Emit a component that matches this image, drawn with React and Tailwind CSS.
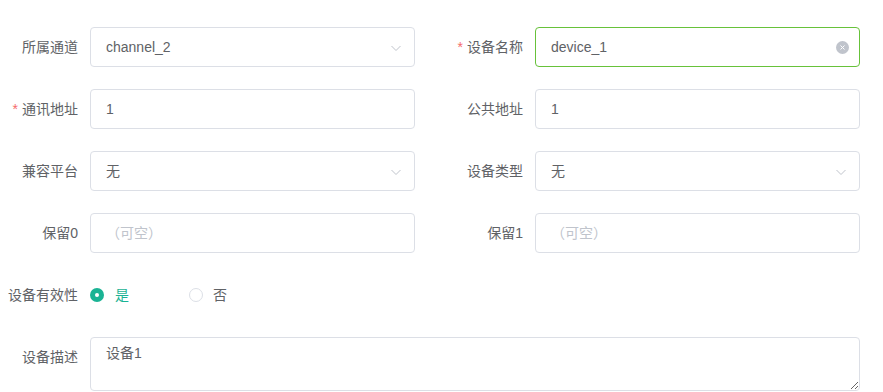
import React from "react";

const font = { fontFamily: '"Liberation Sans", "Noto Sans CJK SC", sans-serif' };

function Label({ children, required }) {
  return (
    <div className="w-[90px] shrink-0 pr-3 flex items-center justify-end text-[14px] text-[#606266] whitespace-nowrap">
      {required && <span className="text-[#f56c6c] mr-[4px]">*</span>}
      {children}
    </div>
  );
}

function Chevron() {
  return (
    <svg width="12" height="12" viewBox="0 0 12 12" className="absolute right-[12px] top-[14px]">
      <path d="M1.5 4 L6 8.5 L10.5 4" fill="none" stroke="#c0c4cc" strokeWidth="1" />
    </svg>
  );
}

function Field({ label, required, value, placeholder, select, clear, success }) {
  return (
    <div className="flex h-10">
      <Label required={required}>{label}</Label>
      <div
        className={`relative w-[325px] h-10 rounded-[4px] border bg-white flex items-center pl-[15px] text-[14px] ${
          success ? "border-[#67c23a]" : "border-[#dcdfe6]"
        }`}
      >
        {value ? (
          <span className="text-[#606266]">{value}</span>
        ) : (
          <span className="text-[#c0c4cc]">{placeholder}</span>
        )}
        {select && <Chevron />}
        {clear && (
          <span className="absolute right-[10px] top-[13px] w-[13px] h-[13px] rounded-full bg-[#c0c4cc] flex items-center justify-center">
            <svg width="7" height="7" viewBox="0 0 7 7">
              <path d="M1.5 1.5 L5.5 5.5 M5.5 1.5 L1.5 5.5" stroke="#fff" strokeWidth="1" />
            </svg>
          </span>
        )}
      </div>
    </div>
  );
}

export default function App() {
  return (
    <div className="w-[883px] h-[392px] bg-white overflow-hidden pt-[27px]" style={font}>
      <div className="grid grid-cols-[415px_415px] gap-x-[30px] gap-y-[22px]">
        <Field label="所属通道" value="channel_2" select />
        <Field label="设备名称" required value="device_1" clear success />
        <Field label="通讯地址" required value="1" />
        <Field label="公共地址" value="1" />
        <Field label="兼容平台" value="无" select />
        <Field label="设备类型" value="无" select />
        <Field label="保留0" placeholder="（可空）" />
        <Field label="保留1" placeholder="（可空）" />
      </div>
      <div className="flex h-10 mt-[22px]">
        <Label>设备有效性</Label>
        <div className="flex items-center text-[14px]">
          <div className="flex items-center">
            <span className="w-[14px] h-[14px] rounded-full bg-[#1ab394] flex items-center justify-center">
              <span className="w-[4px] h-[4px] rounded-full bg-white" />
            </span>
            <span className="ml-[11px] text-[#1ab394]">是</span>
          </div>
          <div className="flex items-center ml-[60px]">
            <span className="w-[14px] h-[14px] rounded-full border border-[#dcdfe6] bg-white" />
            <span className="ml-[10px] text-[#606266]">否</span>
          </div>
        </div>
      </div>
      <div className="flex mt-[22px]">
        <div className="w-[90px] shrink-0 pr-3 flex justify-end pt-[10px] text-[14px] text-[#606266]">设备描述</div>
        <textarea
          defaultValue="设备1"
          className="w-[770px] h-[54px] rounded-[4px] border border-[#dcdfe6] px-[15px] py-[5px] text-[14px] text-[#606266] leading-[1.5] outline-none resize-y"
          style={font}
        />
      </div>
    </div>
  );
}
